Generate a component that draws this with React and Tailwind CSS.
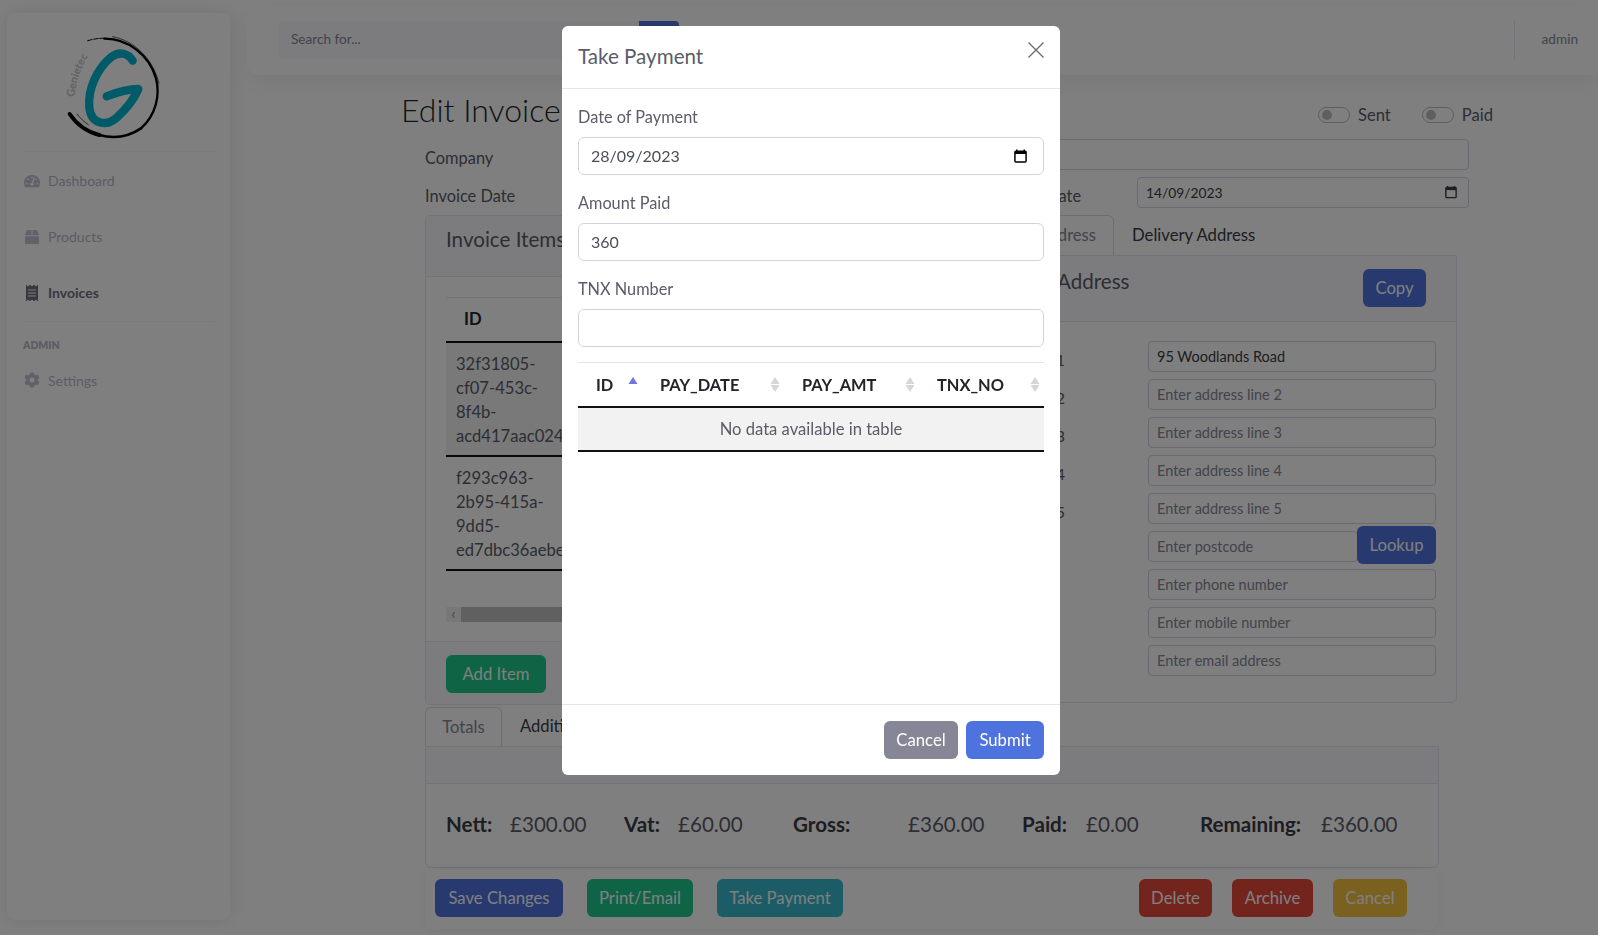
import { FaTachometerAlt, FaBox, FaReceipt, FaCog } from 'react-icons/fa';

const addressFields = [
  { label: 'Address Line 1', value: '95 Woodlands Road' },
  { label: 'Address Line 2', placeholder: 'Enter address line 2' },
  { label: 'Address Line 3', placeholder: 'Enter address line 3' },
  { label: 'Address Line 4', placeholder: 'Enter address line 4' },
  { label: 'Address Line 5', placeholder: 'Enter address line 5' },
];

const contactFields = ['Enter phone number', 'Enter mobile number', 'Enter email address'];

const totals = [
  { label: 'Nett:', value: '£300.00', labelWidth: 'w-[64px]', valueWidth: 'w-[114px]' },
  { label: 'Vat:', value: '£60.00', labelWidth: 'w-[54px]', valueWidth: 'w-[115px]' },
  { label: 'Gross:', value: '£360.00', labelWidth: 'w-[115px]', valueWidth: 'w-[114px]' },
  { label: 'Paid:', value: '£0.00', labelWidth: 'w-[64px]', valueWidth: 'w-[114px]' },
  { label: 'Remaining:', value: '£360.00', labelWidth: 'w-[121px]', valueWidth: 'w-[100px]' },
];

function Logo() {
  return (
    <svg viewBox="0 0 420 390" className="h-[130px] w-[140px]" fill="none" strokeLinecap="round">
      <path d="M140 62 C155 58 170 54 192 55" stroke="#000" strokeWidth="3" strokeDasharray="14 5" />
      <path d="M190 56 C260 55 325 105 345 175 C358 225 345 285 300 325" stroke="#000" strokeWidth="7" />
      <path d="M215 50 C280 62 335 115 354 190" stroke="#000" strokeWidth="2" />
      <path d="M300 325 C260 352 215 356 175 345" stroke="#000" strokeWidth="8" />
      <path d="M175 345 C135 335 105 310 86 282" stroke="#000" strokeWidth="12" />
      <path d="M108 282 C118 295 128 305 142 314" stroke="#000" strokeWidth="2" />
      <path
        d="M275 122 C262 100 235 92 210 112 C170 145 140 205 145 262 C150 312 195 322 228 292 C258 265 280 235 292 207 C262 207 225 218 197 229"
        stroke="#00b5d0"
        strokeWidth="25"
        strokeLinejoin="round"
      />
      <path id="logo-arc" d="M100 232 C105 180 125 130 150 96" />
      <text className="fill-[#c4c4c4] text-[33px] font-bold" fontFamily="Lato, sans-serif">
        <textPath href="#logo-arc">Genietec</textPath>
      </text>
    </svg>
  );
}

function SidebarLink({ icon: Icon, label, active, className, iconClass = 'h-4 w-4' }) {
  return (
    <div className={`flex items-center ${className}`}>
      <Icon className={`shrink-0 ${iconClass} ${active ? 'text-[#6e707e]' : 'text-[#c3c4d2]'}`} />
      <span className={`ml-2 text-[14px] ${active ? 'font-bold text-[#6e707e]' : 'text-[#b7b9cc]'}`}>{label}</span>
    </div>
  );
}

function Sidebar() {
  return (
    <aside className="ml-[7px] mt-[13px] flex h-[907px] w-[223px] shrink-0 flex-col rounded-lg bg-white px-4 shadow-[0_0_18px_rgba(0,0,0,0.1)]">
      <div className="flex h-[139px] justify-center border-b border-[#f4f4f6] pl-[6px] pr-[6px]">
        <div className="-ml-[16px] mt-[7px]">
          <Logo />
        </div>
      </div>
      <div className="pl-[1px]">
        <SidebarLink icon={FaTachometerAlt} label="Dashboard" className="mt-[18px]" />
        <SidebarLink icon={FaBox} label="Products" iconClass="mx-[1px] h-[14px] w-[14px]" className="mt-[35px]" />
        <SidebarLink icon={FaReceipt} label="Invoices" active className="mt-[35px]" />
      </div>
      <div className="mt-[18px] border-t border-[#f4f4f6]" />
      <div className="mt-[16px] text-[10.4px] font-extrabold text-[#b7b9cc]">ADMIN</div>
      <div className="pl-[1px]">
        <SidebarLink icon={FaCog} label="Settings" className="mt-[16px]" />
      </div>
    </aside>
  );
}

function Topbar() {
  return (
    <header className="mt-[5px] flex h-[70px] shrink-0 items-center rounded-l-xl bg-white pl-[32px] shadow-[0_10px_24px_rgba(0,0,0,0.05)]">
      <div className="flex h-[38px] w-[360px] items-center bg-[#f8f9fc] pb-[2px] pl-3 text-[13.6px] text-[#858796]">Search for...</div>
      <div className="h-[38px] w-[40px] rounded-r bg-[#4e73df]" />
      <div className="ml-auto flex h-[38px] items-center border-l border-[#e3e6f0] pb-[2px] pl-[27px] pr-[20px] text-[13.6px] text-[#858796]">admin</div>
    </header>
  );
}

function Toggle({ label, className }) {
  return (
    <div className={`flex items-center ${className}`}>
      <div className="flex h-4 w-8 items-center rounded-full border border-[#bfbfbf] bg-white pl-[3px]">
        <div className="h-[10px] w-[10px] rounded-full bg-[#bfbfbf]" />
      </div>
      <span className="ml-2 text-[16.6px] text-[#5a5c69]">{label}</span>
    </div>
  );
}

function FieldInput({ value, placeholder, className }) {
  return (
    <input
      readOnly
      value={value || ''}
      placeholder={placeholder}
      className={`h-[31px] rounded border border-[#d1d3e2] bg-white px-2 text-[#3a3b45] outline-none placeholder:text-[#858796] ${className}`}
    />
  );
}

function CalendarIcon({ className }) {
  return (
    <svg viewBox="0 0 14 16" className={className} fill="none">
      <path d="M3 1v2M11 1v2" stroke="currentColor" strokeWidth="1.6" />
      <rect x="1" y="2.8" width="12" height="11.7" rx="1" stroke="currentColor" strokeWidth="1.6" />
      <rect x="1" y="2.8" width="12" height="3" fill="currentColor" />
    </svg>
  );
}

function Button({ color, className, children }) {
  return (
    <button className={`flex h-[38px] shrink-0 items-center justify-center rounded-md pt-[2px] text-[16.7px] text-white ${color} ${className}`}>
      {children}
    </button>
  );
}

function InvoiceItemsCard() {
  return (
    <div className="flex h-[490px] w-[535px] flex-col rounded-md border border-[#e3e6f0] bg-white">
      <div className="h-[61px] shrink-0 border-b border-[#e3e6f0] bg-[#f8f9fc] pl-5 pt-[8px] text-[20.6px] text-[#5a5c69]">Invoice Items</div>
      <div className="flex-1 pl-5 pt-5">
        <div className="flex h-[46px] items-center border-b-[2px] border-t border-b-[#111] border-t-[#e3e6f0] pl-[18px] text-[16.6px] font-bold text-[#212529]">ID</div>
        <div className="h-[114px] border-b-[2px] border-[#111] bg-[#f2f2f2] pl-[10px] pt-[9px] text-[16.6px] leading-6 text-[#5a5c69]">
          <div>32f31805-</div>
          <div>cf07-453c-</div>
          <div>8f4b-</div>
          <div>acd417aac024</div>
        </div>
        <div className="h-[114px] border-b-[2px] border-[#111] pl-[10px] pt-[9px] text-[16.6px] leading-6 text-[#5a5c69]">
          <div>f293c963-</div>
          <div>2b95-415a-</div>
          <div>9dd5-</div>
          <div>ed7dbc36aebe</div>
        </div>
        <div className="mt-[36px] flex h-[15px] items-center bg-[#f1f1f1]">
          <span className="w-[15px] pb-[2px] text-center text-[15px] font-bold leading-none text-[#a3a3a3]">‹</span>
          <div className="h-full flex-1 bg-[#c1c1c1]" />
        </div>
      </div>
      <div className="flex h-[63px] shrink-0 items-center border-t border-[#e3e6f0] bg-[#f8f9fc] pl-5 pt-[2px]">
        <Button color="bg-[#1cc88a]" className="w-[100px]">Add Item</Button>
      </div>
    </div>
  );
}

function AddressCard() {
  return (
    <div className="w-[487px]">
      <div className="flex h-10 items-center">
        <div className="flex h-10 w-[144px] items-center justify-end whitespace-nowrap rounded-t-md border border-b-0 border-[#d9dbe6] bg-white pr-[17px] text-[16.6px] text-[#858796]">
          Invoice Address
        </div>
        <div className="ml-[18px] pt-[1px] text-[16.7px] text-[#3a3b45]">Delivery Address</div>
      </div>
      <div className="flex h-[448px] flex-col rounded-b-md border border-[#e3e6f0] bg-white">
        <div className="flex h-[66px] shrink-0 items-start justify-between border-b border-[#e3e6f0] bg-[#f8f9fc] pl-[17px] pr-[30px] pt-[13px]">
          <span className="-mt-[3px] text-[20.6px] text-[#5a5c69]">Invoice Address</span>
          <Button color="bg-[#4e73df]" className="w-[63px]">Copy</Button>
        </div>
        <div className="flex flex-col gap-[7px] pt-[19px]">
          {addressFields.map((field) => (
            <div key={field.label} className="flex items-center">
              <span className="flex w-[94px] justify-end whitespace-nowrap pt-[7px] text-[16px] text-[#5a5c69]">{field.label}</span>
              <FieldInput value={field.value} placeholder={field.placeholder} className="ml-[83px] w-[288px] text-[14.5px]" />
            </div>
          ))}
          <div className="flex h-[31px] items-start pl-[177px]">
            <FieldInput placeholder="Enter postcode" className="w-[210px] text-[14.5px]" />
            <Button color="bg-[#4e73df]" className="z-10 -ml-[1px] -mt-[5px] w-[79px]">Lookup</Button>
          </div>
          {contactFields.map((placeholder) => (
            <div key={placeholder} className="flex pl-[177px]">
              <FieldInput placeholder={placeholder} className="w-[288px] text-[14.5px]" />
            </div>
          ))}
        </div>
      </div>
    </div>
  );
}

function TotalsCard() {
  return (
    <div className="w-[1014px]">
      <div className="flex h-[39px] items-center">
        <div className="flex h-[39px] w-[77px] items-center justify-center rounded-t-md border border-b-0 border-[#d9dbe6] bg-white text-[16.6px] text-[#858796]">Totals</div>
        <div className="ml-[18px] text-[16.6px] text-[#3a3b45]">Additional</div>
      </div>
      <div className="h-[122px] rounded-b-md border border-[#e3e6f0] bg-white">
        <div className="h-[37px] border-b border-[#e3e6f0] bg-[#f8f9fc]" />
        <div className="flex h-[84px] items-center pb-[4px] pl-[20px] text-[20.6px]">
          {totals.map((item) => (
            <div key={item.label} className="flex">
              <span className={`font-bold text-[#3a3b45] ${item.labelWidth}`}>{item.label}</span>
              <span className={`text-[#5a5c69] ${item.valueWidth}`}>{item.value}</span>
            </div>
          ))}
        </div>
      </div>
    </div>
  );
}

function ActionBar() {
  return (
    <div className="mt-[2px] flex h-[59px] w-[1012px] items-start rounded-lg bg-white pl-[10px] pr-[30px] pt-[9px] shadow-[0_0_14px_rgba(0,0,0,0.06)]">
      <Button color="bg-[#4e73df]" className="w-[128px]">Save Changes</Button>
      <Button color="bg-[#1cc88a]" className="ml-6 w-[106px]">Print/Email</Button>
      <Button color="bg-[#36b9cc]" className="ml-6 w-[126px]">Take Payment</Button>
      <Button color="bg-[#e74a3b]" className="ml-auto w-[73px]">Delete</Button>
      <Button color="bg-[#e74a3b]" className="ml-5 w-[81px]">Archive</Button>
      <Button color="bg-[#f6c23e]" className="ml-5 w-[74px]">Cancel</Button>
    </div>
  );
}

function InvoiceForm() {
  return (
    <main className="ml-[178px] w-[1044px]">
      <div className="-ml-[24px] mt-[12px] flex h-[45px] items-center">
        <h1 className="text-[32px] font-light text-[#212529]">Edit Invoice</h1>
        <div className="-mr-[24px] ml-auto flex pt-[12px]">
          <Toggle label="Sent" />
          <Toggle label="Paid" className="ml-[31px]" />
        </div>
      </div>
      <div className="mt-[7px] flex h-[30px] items-center">
        <span className="w-[200px] pt-[8px] text-[16.4px] text-[#5a5c69]">Company</span>
        <FieldInput className="h-[30px] flex-1" />
      </div>
      <div className="mt-2 flex h-[30px] items-center">
        <span className="w-[120px] pt-[8px] text-[16.4px] text-[#5a5c69]">Invoice Date</span>
        <span className="ml-[467px] w-[125px] pt-[8px] text-[16.4px] text-[#5a5c69]">Due Date</span>
        <div className="relative flex-1">
          <FieldInput value="14/09/2023" className="h-[30px] w-full text-[13.8px]" />
          <CalendarIcon className="absolute right-[12px] top-[8px] h-[14px] w-[12px] text-[#3a3b45]" />
        </div>
      </div>
      <div className="mt-2 flex gap-[10px]">
        <InvoiceItemsCard />
        <AddressCard />
      </div>
      <div className="mt-[2px]">
        <TotalsCard />
        <ActionBar />
      </div>
    </main>
  );
}

function ModalField({ label, value, date }) {
  return (
    <div className="mb-[15px]">
      <div className="mb-[9px] h-[24px] pt-[1px] text-[16.3px] leading-6 text-[#5a5c69]">{label}</div>
      <div className="relative">
        <input
          readOnly
          value={value || ''}
          className="h-[38px] w-full rounded-md border border-[#d1d3e2] bg-white px-3 pb-[2px] text-[16px] text-[#495057] outline-none"
        />
        {date && <CalendarIcon className="absolute right-[17px] top-[11px] h-4 w-[13px] text-black" />}
      </div>
    </div>
  );
}

function SortArrows({ active }) {
  return (
    <svg viewBox="0 0 10 15" className="h-[15px] w-[10px] shrink-0">
      <path d="M5 0l4.5 7h-9z" fill={active ? '#6f76dc' : '#d6d6d6'} />
      {!active && <path d="M5 15l4.5-7h-9z" fill="#d6d6d6" />}
    </svg>
  );
}

function PaymentModal() {
  return (
    <div className="fixed inset-0 z-50 bg-black/50">
      <div className="ml-[562px] mt-[26px] flex h-[749px] w-[498px] flex-col rounded-md bg-white">
        <div className="flex h-[63px] shrink-0 justify-between border-b border-[#e3e6f0] pl-4 pr-4">
          <h2 className="pt-[17px] text-[20.6px] leading-[26px] text-[#5a5c69]">Take Payment</h2>
          <svg viewBox="0 0 16 16" className="mt-4 h-4 w-4" stroke="#6d6d6d" strokeWidth="1.4">
            <path d="M0.5 0.5l15 15M15.5 0.5l-15 15" />
          </svg>
        </div>
        <div className="flex-1 px-4 pt-[15px]">
          <ModalField label="Date of Payment" value="28/09/2023" date />
          <ModalField label="Amount Paid" value="360" />
          <ModalField label="TNX Number" />
          <div className="mt-[3px] flex h-[46px] items-center border-b-[2px] border-t border-b-[#111] border-t-[#e3e6f0] text-[16.4px] font-bold text-[#212529]">
            <span className="ml-[18px] w-[32px] pt-[2px]">ID</span>
            <SortArrows active />
            <span className="ml-[22px] w-[110px] pt-[2px]">PAY_DATE</span>
            <SortArrows />
            <span className="ml-[22px] w-[103px] pt-[2px]">PAY_AMT</span>
            <SortArrows />
            <span className="ml-[22px] w-[93px] pt-[2px]">TNX_NO</span>
            <SortArrows />
          </div>
          <div className="flex h-[44px] items-center justify-center border-b-[2px] border-[#111] bg-[#f2f2f2] text-[16.6px] text-[#5a5c69]">
            No data available in table
          </div>
        </div>
        <div className="flex h-[71px] shrink-0 items-center justify-end gap-2 border-t border-[#e3e6f0] pr-4">
          <Button color="bg-[#858796]" className="w-[74px]">Cancel</Button>
          <Button color="bg-[#4e73df]" className="w-[78px]">Submit</Button>
        </div>
      </div>
    </div>
  );
}

export default function App() {
  return (
    <div className="flex h-screen overflow-hidden bg-white font-['Lato',sans-serif]">
      <Sidebar />
      <div className="ml-[17px] flex min-w-0 flex-1 flex-col">
        <Topbar />
        <InvoiceForm />
      </div>
      <PaymentModal />
    </div>
  );
}
